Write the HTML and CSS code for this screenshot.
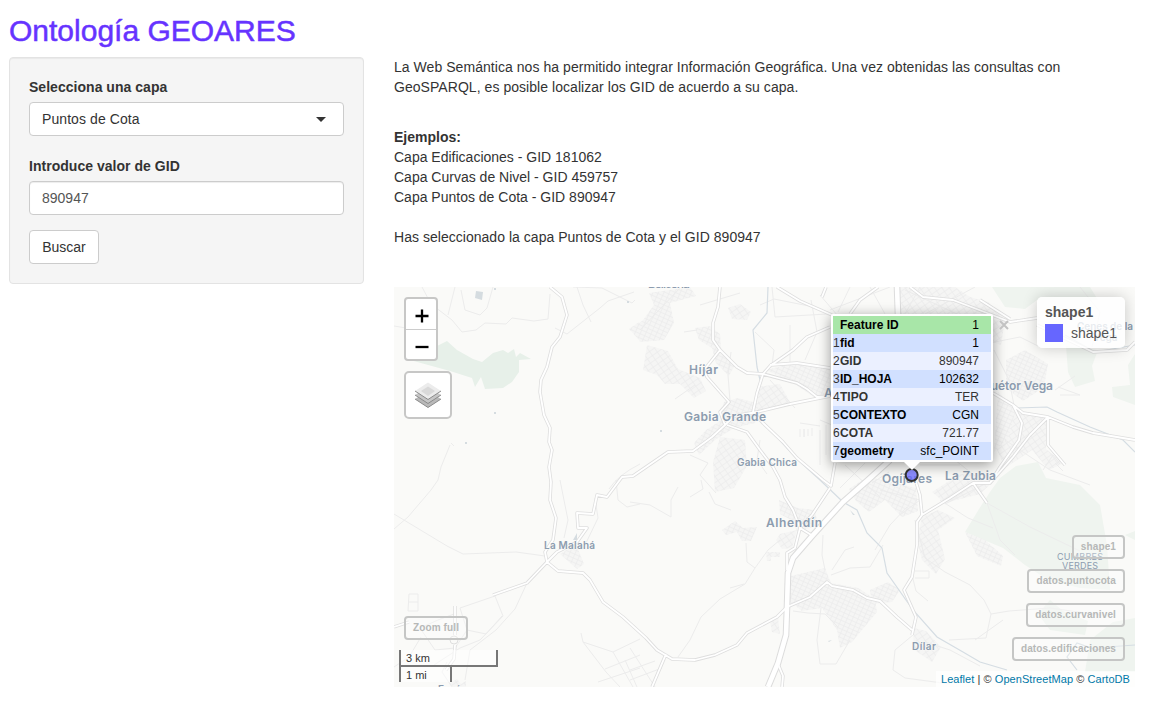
FILE: index.html
```html
<!DOCTYPE html>
<html lang="es">
<head>
<meta charset="utf-8">
<title>Ontología GEOARES</title>
<link rel="stylesheet" href="styles.css">
</head>
<body>
<h2 class="title">Ontología GEOARES</h2>
<div class="row">
  <form class="well">
    <div class="label">Selecciona una capa</div>
    <div class="control select"><span>Puntos de Cota</span><i class="caret"></i></div>
    <div class="label">Introduce valor de GID</div>
    <div class="control input">890947</div>
    <button type="button" class="btn">Buscar</button>
  </form>
  <main class="main">
    <p class="intro">La Web Semántica nos ha permitido integrar Información Geográfica. Una vez obtenidas las consultas con<br>GeoSPARQL, es posible localizar los GID de acuerdo a su capa.</p>
    <div class="examples"><b>Ejemplos:</b><br>Capa Edificaciones - GID 181062<br>Capa Curvas de Nivel - GID 459757<br>Capa Puntos de Cota - GID 890947</div>
    <p class="chosen">Has seleccionado la capa Puntos de Cota y el GID 890947</p>
    <div class="map">
      <svg class="tiles" viewBox="394 287 741 400" width="741" height="400">
        <defs>
          <pattern id="streets" width="5" height="4" patternUnits="userSpaceOnUse" patternTransform="rotate(24)"><rect width="5" height="4" fill="#f5f5f4"/><path d="M0 .5H5M.5 0V4" stroke="#ebebeb" stroke-width=".7"/></pattern>
          <pattern id="streets2" width="6" height="5" patternUnits="userSpaceOnUse" patternTransform="rotate(-35)"><rect width="6" height="5" fill="#f5f5f4"/><path d="M0 .5H6M.5 0V5" stroke="#ebebeb" stroke-width=".7"/></pattern>
        </defs>
        <rect x="394" y="287" width="741" height="400" fill="#fafaf8"/>
        <g class="green">
          <path d="M410 360L435 347 447 341 457 350 473 359 482 362 493 353 503 350 508 353 514 349 516 357 520 353 531 359 519 360 519 372 512 382 503 388 485 389 481 377 475 387 472 378 450 371Z"/>
          <path d="M992 287H1090L1098 300 1037 300 1025 309 1005 307Z"/>
          <path d="M1066 346L1098 350 1092 366 1095 381 1075 387 1068 372Z"/>
          <path d="M1135 354L1128 365 1130 385 1112 387 1113 397 1135 405Z"/>
          <path d="M1000 478L1016 466 1038 462 1046 478 1080 485 1100 505 1107 545 1110 590 1080 588 1048 580 1025 565 1003 548 965 532 979 509 990 492Z"/>
          <path d="M1038 614L1050 600 1063 611 1088 621 1085 635 1050 630Z"/>
          <path d="M1090 640L1113 622 1135 618V672H1085Z"/>
          <path d="M1125 535l10-4v9z"/>
        </g>
        <g class="urban">
          <path d="M649 293L690 287 696 296 670 303 674 323 664 340 640 342 633 328 643 320 654 305Z"/>
          <path d="M647 345L668 351 678 369 700 378 706 391 694 398 680 384 665 384 657 375 643 370Z"/>
          <path d="M695 328L710 326 720 334 721 348 735 365 729 376 716 363 712 348 699 340Z"/>
          <path d="M728 308L740 304 751 312 747 320 732 319Z"/>
          <path d="M724 402L738 398 764 405 755 423 734 428 715 440 699 455 694 443 706 430 720 421Z"/>
          <path d="M720 437L745 440 747 466 734 488 715 492 713 462Z"/>
          <path d="M766 370L790 364 830 366V397L815 398 795 384Z"/>
          <path d="M757 387L780 384 790 402 758 412Z"/>
          <path d="M779 500L798 508 815 510 818 526 797 531 791 520 780 514Z"/>
          <path d="M780 534L797 530 792 548 782 549 776 540Z"/>
          <path d="M722 530L735 521 743 528 757 527 751 541 742 541 737 532 726 535Z"/>
          <path d="M766 552h14v5h-9v4h-4z"/>
          <path d="M791 576L825 568 831 583 858 588 875 599 877 612 852 642 840 648 837 630 822 608 802 611 788 600Z"/>
          <path d="M770 621L778 618 780 634 772 632Z"/>
          <path d="M849 489L867 477 888 481 916 488 918 511 902 517 885 500 869 512 856 501Z"/>
          <path d="M922 517L938 510 955 518 938 530 945 559 936 574 922 560 917 540Z"/>
          <path d="M965 532L985 540 1003 556 1001 566 977 556Z"/>
          <path d="M932 492L960 474 1000 475 980 494 945 503Z"/>
          <path d="M1006 360L1025 350 1048 364 1044 387 1023 401 1006 388Z"/>
          <path d="M1018 410L1046 418 1046 449 1064 463 1049 470 1032 450 1005 468 996 448Z"/>
          <path d="M998 392l18 18-8 28-14 14z"/>
          <path d="M896 287L955 287 970 297 988 302 1005 320 1001 345 960 330 900 318Z"/>
          <path d="M870 590l18-8 12 8-8 12-20 2z"/>
          <path d="M914 628l12 3 15 16-9 15-19-13z"/>
          <path d="M560 554L576 544 584 564 577 569Z"/>
          <path d="M450 683l7-4 4 5 5-3v6h-14z"/>
          <path d="M629 329l10-7v18z"/>
        </g>
        <g class="minor">
          <path d="M422 287L431 304 452 320 462 332 476 330 485 323 506 324 512 318 534 321 548 319 550 294M455 287l-7 28M461 290L465 310 480 315 487 308 493 287M394 326l12 2M577 287l6 18 8 17M573 287L602 288 632 303 635 300M555 328l12 6 33-26 8-7 26-9M450 445L441 467 438 480 431 490 408 517 394 529M394 514L447 546 463 554 516 552 545 556M451 443l3 3"/>
          <path d="M609 489Q618 475 640 464M616 480L618 500 627 507 640 504M560 480l8 40-4 18M595 498l3 20-12 25M527 583L515 609 496 630 470 650 465 680M460 608L495 596 503 616 480 640 460 648 434 665M460 608l7 22 19 4 16-18M467 630l-12 18-20 2-15-22 18-8 16-6M409 594h9v17h-10zM409 602h9M394 667l15-10 12-20M447 662L442 672 452 687"/>
          <path d="M581 633L583 642 613 652 640 639M583 642L606 672 620 687M613 652l20 35M598 682L640 668M605 669L640 655M630 648l25 39M630 670l25-9M630 680l32-12M625 660l12 27"/>
          <path d="M630 502L650 505 671 517 671 500 678 487M690 497l13-8-2-9M709 492l6 12 16 6M746 543L747 562 755 568 745 584 720 599 701 617 690 640 678 657M730 588l14-4M755 568L768 550 780 540M640 330l40-42M700 305l40-12M684 332l13-2M695 385l-20 14M731 352L728 375 730 401"/>
          <path d="M772 287l3 30 52-3M755 332L774 350 772 365M790 325v37M805 360l12-28-6-32M760 305l14-6 40 8M820 430v35M826 425v30M800 429v8m4-8v8M804 437v-8m4 0v7m4-8v8M770 380l25 28M690 455l18 8-8 12 16 18M760 440l-3 20 10 14M800 423l20 3"/>
          <path d="M823 535L822 555 825 570M831 575L850 568 870 567 883 545M832 570L845 550 854 547M821 608L817 640 820 664 836 664 850 640M793 611L808 613 825 614 838 627M880 490L920 500 900 515M872 483l17-11M875 550L890 525 907 507M915 520L925 558 945 572 970 585 984 600 991 614 986 638 949 640M991 614L1009 611 1050 608 1100 615M1003 620L975 640M913 635L895 650 893 670 905 678 950 684M925 642l25 8 30 16M912 575l4 16 12 10M915 571h14v7h-14M987 503L1000 540 1015 555M987 503L1030 527 1080 551M940 500l28 18 25 10M1058 387L1080 395 1060 395M1075 376L1055 390M1043 470l10-15 7 9M980 345l40-8 20 10M1080 287l20 25-8 35M1005 440l45 30 40 15M1055 463l8 8"/>
          <path d="M820 295L850 330M830 310l60-23M820 420l12 5M850 287l-12 25M870 287l15 27M955 460l30 24-40 20M920 465l40 0M845 465l35 32M865 463l-25 25M905 290l65 30M920 287l-15 27M975 287l-50 27M994 350l15 30 5 25"/>
        </g>
        <path class="river" d="M768 287L767 313 753 330 757 367 760 380M765 424L797 459 820 480 843 502 857 510 867 533 882 548 887 573 913 610 937 637 963 652 980 662 1007 670M993 393L1017 408 1047 407 1057 412 1090 427 1123 440 1135 452M1077 670L1067 657 1077 643 1097 650 1107 647 1135 645M1065 335L1095 352 1135 345"/>
        <path fill="#d5dce0" d="M476 291l7 1-1 8-7-2zM494 288h2v2h-2zM627 301h2v2h-2zM494 412h2v2h-2zM465 442h2v2h-2zM660 430h2v2h-2zM573 540l4-7 0 7zM850 510l5 5-2 0zM828 641l4-1-3 2z"/>
        <defs>
          <path id="roads" d="M550 287L562 297 567 315 560 337 552 347 547 367 541 380 540 392 544 415 550 428 549 442 552 450 549 467 551 482 550 500 556 518 553 540 545 552 547 562 527 583 493 595M547 562L558 571 583 573 590 580 603 602 623 617 646 638 657 650 672 659 695 660 715 655 737 645 747 633 777 617 787 607 810 597 827 582 832 586 853 590 867 598 880 601 897 617 912 630M547 562L557 552 577 542 587 528 578 528 577 513 593 514 597 495 607 497 622 477 633 476 668 452 693 451 712 437 725 425 720 412 729 402 707 377 704 370 720 350 713 340 713 323 718 307 720 287M720 350L737 367 747 373 763 374 797 383 807 389 817 397 830 396M725 425L734 416 757 412 790 404 830 396M763 374L757 393 753 412 763 423 783 442 797 458 823 480 831 486 835 463M763 374L770 366 793 350 807 337 830 327M770 365L797 363 830 368M727 425L747 432 760 450 773 467 780 480 785 497 793 510 800 528 795 548 787 553 787 570M800 528L812 515 830 488M800 528l13 8M777 287L800 301 832 315M850 314L860 300 878 287M826 287l-4 10M910 287L923 297 953 300 987 313 1010 322 1037 318M980 300L1010 319M1037 325L1093 352 1127 350 1135 342M993 393L1013 405 1023 413 1048 417 1073 427 1093 433 1123 438 1135 440M1048 417V445L1065 465M1013 405L1022 423 1019 440 1000 467 990 483M1048 417L1030 435 1013 457 990 483 973 483 950 498 922 515 917 522 917 545 912 577 904 590 916 617 912 635M922 515L920 495 916 482M973 483L987 503M666 654L652 687M778 664L783 676 782 687M455 606V635M455 645L454 659 446 670M394 627l15-5"/>
          <path id="mway" d="M890 460L868 480 843 502 813 535 793 558 788 573 787 607 786 635 778 663 768 687M897 287L898 315"/>
        </defs>
        <use href="#roads" class="casing"/>
        <use href="#mway" class="mcase"/>
        <use href="#roads" class="core"/>
        <use href="#mway" class="mcore"/>
        <circle cx="454" cy="640" r="4" fill="none" stroke="#dedede"/>
        <g class="places">
          <text x="689" y="374" textLength="29">Híjar</text>
          <text x="684" y="421" textLength="82">Gabia Grande</text>
          <text x="737" y="466" textLength="60" class="sm">Gabia Chica</text>
          <text x="824" y="397">A</text>
          <text x="544" y="549" textLength="51" class="sm">La Malahá</text>
          <text x="766" y="527" textLength="56">Alhendín</text>
          <text x="882" y="483" textLength="50">Ogíjares</text>
          <text x="945" y="480" textLength="51">La Zubia</text>
          <text x="982" y="390" textLength="71">Huétor Vega</text>
          <text x="1077" y="330" textLength="56" class="sm">Cenes de la</text>
          <text x="1093" y="341" class="sm">Vega</text>
          <text x="912" y="650" textLength="24" class="sm">Dílar</text>
          <text x="1057" y="560" textLength="46" class="cap">CUMBRES</text>
          <text x="1062" y="569" textLength="36" class="cap">VERDES</text>
          <text x="648" y="287.5" textLength="42">Belicena</text>
          <text x="438" y="693" textLength="38" class="sm">Escúzar</text>
        </g>
        <circle cx="911.7" cy="475" r="6" fill="#66f" fill-opacity=".75" stroke="#333" stroke-width="2"/>
      </svg>

      <div class="zoom">
        <div class="zoom-key"><svg width="14" height="14" viewBox="0 0 14 14"><path d="M7 .5v13M.5 7h13" stroke="#000" stroke-width="2.3"/></svg></div>
        <div class="zoom-key"><svg width="14" height="14" viewBox="0 0 14 14"><path d="M.5 7h13" stroke="#000" stroke-width="2.3"/></svg></div>
      </div>
      <div class="layers">
        <svg width="26" height="26" viewBox="0 0 26 26">
          <path d="M0 17L13 9 26 17 13 25.5Z" fill="#b9b9b9"/><path d="M0 17L13 25.5 26 17" fill="none" stroke="#8b8b8b"/>
          <path d="M0 13L13 5 26 13 13 21.5Z" fill="#c6c6c6"/><path d="M0 13L13 21.5 26 13" fill="none" stroke="#8b8b8b"/>
          <path d="M0 9L13 .5 26 9 13 17.5Z" fill="#ececec"/><path d="M6 9L13 4.5 20 9 13 14Z" fill="#d9d9d9"/><path d="M0 9L13 17.5 26 9" fill="none" stroke="#8b8b8b"/>
        </svg>
      </div>

      <div class="legend">
        <b>shape1</b>
        <div class="legend-item"><i class="swatch"></i><span>shape1</span></div>
      </div>

      <div class="popup">
        <table>
          <tr class="head"><td></td><th>Feature ID</th><td>1</td></tr>
          <tr><td>1</td><th>fid</th><td>1</td></tr>
          <tr class="alt"><td>2</td><th>GID</th><td>890947</td></tr>
          <tr><td>3</td><th>ID_HOJA</th><td>102632</td></tr>
          <tr class="alt"><td>4</td><th>TIPO</th><td>TER</td></tr>
          <tr><td>5</td><th>CONTEXTO</th><td>CGN</td></tr>
          <tr class="alt"><td>6</td><th>COTA</th><td>721.77</td></tr>
          <tr><td>7</td><th>geometry</th><td>sfc_POINT</td></tr>
        </table>
        <svg class="tip" width="20" height="9" viewBox="0 0 20 9"><path d="M1 0H19L10 9Z" fill="#fff"/></svg>
        <svg class="close" width="10" height="10" viewBox="0 0 10 10"><path d="M1 1L9 9M9 1L1 9" stroke="#c3c3c3" stroke-width="2"/></svg>
      </div>

      <div class="tag full">Zoom full</div>
      <div class="tags">
        <div class="tag">shape1</div>
        <div class="tag">datos.puntocota</div>
        <div class="tag">datos.curvanivel</div>
        <div class="tag">datos.edificaciones</div>
      </div>
      <div class="scale">
        <div class="km">3 km</div>
        <div class="mi">1 mi</div>
      </div>
      <div class="credit"><a>Leaflet</a> | © <a>OpenStreetMap</a> © <a>CartoDB</a></div>
    </div>
  </main>
</div>
</body>
</html>
```
FILE: styles.css
```css
* { box-sizing: border-box; }
body {
  margin: 0;
  padding: 14px 14px 0 9px;
  height: 701px;
  overflow: hidden;
  background: #fff;
  color: #333;
  font: 14px/20px "Liberation Sans", Arial, sans-serif;
}
.title {
  margin: 0 0 10px;
  font-size: 30px;
  line-height: 33px;
  font-weight: 400;
  color: #63f;
  -webkit-text-stroke: .5px #63f;
}
.row { display: flex; align-items: flex-start; gap: 30px; }
.well {
  width: 355px;
  height: 227px;
  padding: 19px;
  background: #f5f5f5;
  border: 1px solid #e3e3e3;
  border-radius: 4px;
  box-shadow: inset 0 1px 1px rgba(0,0,0,.05);
}
.label { font-weight: 700; margin-bottom: 5px; letter-spacing: .03px; }
.control {
  display: flex;
  align-items: center;
  justify-content: space-between;
  height: 34px;
  padding: 0 12px;
  border: 1px solid #ccc;
  border-radius: 4px;
  background: #fff;
}
.select { margin-bottom: 20px; padding-right: 17px; letter-spacing: .08px; }
.input { margin-bottom: 15px; color: #555; box-shadow: inset 0 1px 1px rgba(0,0,0,.075); }
.caret { border: 5px solid transparent; border-top-color: #333; border-bottom: 0; }
.btn {
  height: 34px;
  width: 70px;
  padding: 0;
  border: 1px solid #ccc;
  border-radius: 4px;
  background: #fff;
  color: #333;
  font: inherit;
}
.main { width: 741px; }
.intro { margin: 0 0 30px; letter-spacing: .05px; }
.intro::first-line { letter-spacing: .05px; }
.examples { margin-bottom: 20px; }
.chosen { margin: 0 0 40px; letter-spacing: .03px; }
.map { position: relative; height: 400px; overflow: hidden; font-size: 12px; }
.tiles { display: block; }
.green path { fill: #eff4ef; }
.green path:first-child { fill: #e7f0e9; }
.urban path { fill: url(#streets); }
.urban path:nth-child(even) { fill: url(#streets2); }
.minor { fill: none; stroke: #ececec; stroke-width: 1; }
.river { fill: none; stroke: #d5dde3; stroke-width: 1.2; }
.casing { fill: none; stroke: #dedede; stroke-width: 3.4; stroke-linejoin: round; }
.core { fill: none; stroke: #fff; stroke-width: 1.8; stroke-linejoin: round; }
.mcase { fill: none; stroke: #dcdcdc; stroke-width: 6.6; stroke-linejoin: round; }
.mcore { fill: none; stroke: #fff; stroke-width: 4.6; stroke-linejoin: round; }
.places {
  fill: #8c9caf;
  font: 600 12px Inter, sans-serif;
  paint-order: stroke;
  stroke: #fafaf8;
  stroke-width: 1px;
}
.places .sm { font-size: 10px; }
.places .cap { font-size: 9px; font-weight: 400; stroke: none; }
.zoom, .layers {
  position: absolute;
  left: 10px;
  border: 2px solid #c7c7c6;
  border-radius: 4px;
  background: #fff;
}
.zoom { top: 10px; width: 34px; height: 64px; }
.zoom-key { display: flex; height: 30px; align-items: center; justify-content: center; padding-left: 1px; padding-top: 4px; }
.zoom-key:first-child { height: 31px; border-bottom: 1px solid #ccc; }
.layers { top: 84px; width: 48px; height: 48px; display: flex; align-items: center; justify-content: center; border-radius: 5px; }
.legend {
  position: absolute;
  top: 10px;
  right: 10px;
  width: 88px;
  height: 51px;
  padding: 6px 8px;
  border-radius: 5px;
  background: rgba(255,255,255,.8);
  box-shadow: 0 0 15px rgba(0,0,0,.2);
  color: #555;
  font-size: 14px;
  line-height: 18px;
}
.legend-item { display: flex; gap: 8px; margin-top: 3px; }
.swatch { width: 18px; height: 18px; background: #66f; }
.popup {
  position: absolute;
  left: 437px;
  top: 27px;
  width: 162px;
  padding: 2px;
  background: #fff;
  border-radius: 2px;
  box-shadow: 0 3px 14px rgba(0,0,0,.4);
}
.popup table { width: 158px; border-collapse: collapse; color: #000; background: #d1e0ff; line-height: 18px; }
.popup td, .popup th { height: 18px; padding: 0; }
.popup th { text-align: left; }
.popup td:last-child { text-align: right; padding-right: 12px; }
.popup td:first-child { width: 7px; color: #333; }
.popup .head { background: #a8e6a8; }
.popup .alt { background: #ebf0ff; color: #333; }
.tip { position: absolute; left: 71px; top: 147px; }
.close { position: absolute; left: 168px; top: 6px; }
.tag {
  padding: 0 7px;
  height: 24px;
  border: 2px solid #c5c6c5;
  border-radius: 4px;
  color: #b6b8b7;
  background: rgba(255,255,255,.3);
  font-size: 10px;
  line-height: 20px;
  font-weight: 700;
  letter-spacing: .12px;
  text-align: center;
  white-space: nowrap;
}
.full { position: absolute; left: 10px; top: 329px; width: 64px; }
.tags { position: absolute; right: 10px; top: 248px; display: flex; flex-direction: column; align-items: flex-end; gap: 10px; }
.scale { position: absolute; left: 5px; top: 363px; font-size: 11px; line-height: 17px; }
.km, .mi { border: 2px solid #777; border-top: 0; padding-left: 5px; height: 17px; background: rgba(255,255,255,.5); }
.km { width: 99px; }
.mi { width: 53px; height: 15px; border-bottom: 0; }
.credit {
  position: absolute;
  right: 0;
  bottom: 0;
  height: 16px;
  padding: 0 5px;
  background: rgba(255,255,255,.7);
  font-size: 11px;
  line-height: 16px;
  letter-spacing: .05px;
  white-space: nowrap;
}
.credit a { color: #0078a8; }
```
